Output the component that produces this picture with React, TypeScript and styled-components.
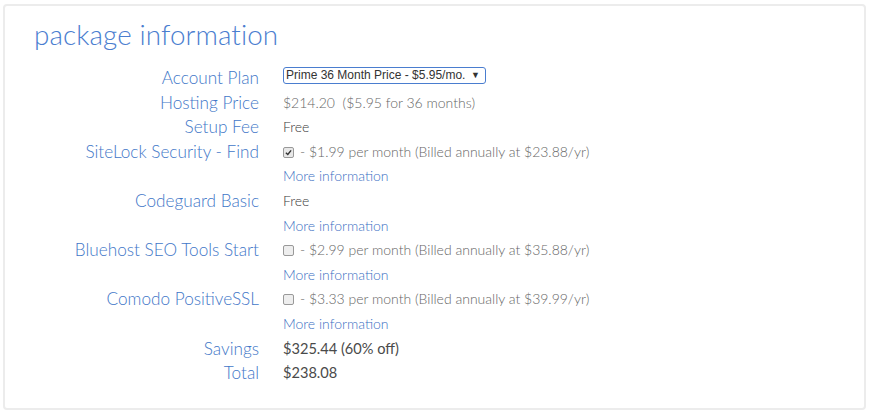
import React from 'react'
import styled, { createGlobalStyle } from 'styled-components'

const GlobalStyle = createGlobalStyle`
  html, body {
    margin: 0;
    padding: 0;
    background: #ffffff;
    font-family: Lato, "Open Sans", sans-serif;
  }
`

const Page = styled.div`
  padding: 4px 3px 4px 3px;
`

const Panel = styled.div`
  border: 2px solid #ececec;
  border-radius: 4px;
  background: #fff;
  padding: 12px 28px 26px 29px;
  height: 406px;
  box-sizing: border-box;
`

const Title = styled.h2`
  margin: 0 0 14px 0;
  font-family: Lato, sans-serif;
  font-weight: 300;
  font-size: 27.8px;
  line-height: 34px;
  color: #4a7dcf;
  letter-spacing: 0.1px;
`

const Grid = styled.div`
  display: grid;
  grid-template-columns: 225px 1fr;
  column-gap: 24px;
`

const Label = styled.div`
  text-align: right;
  font-weight: 300;
  font-size: 17.2px;
  line-height: 24.6px;
  color: #4277c8;
  white-space: nowrap;
`

const ValueCell = styled.div`
  display: flex;
  flex-direction: column;
`

const Line = styled.div<{ $tone?: 'light' | 'dark' | 'strong' }>`
  display: flex;
  align-items: center;
  gap: 4px;
  font-size: ${({ $tone }) => ($tone === 'strong' ? '14.6px' : '14px')};
  line-height: 24.6px;
  font-weight: ${({ $tone }) => ($tone === 'strong' ? 400 : 300)};
  color: ${({ $tone }) =>
    $tone === 'light' ? '#666' : $tone === 'strong' ? '#4a4a4a' : '#3a3a3a'};
  white-space: pre;
`

const MoreInfo = styled.a`
  font-size: 14px;
  line-height: 24.6px;
  font-weight: 300;
  color: #3a6fc3;
  text-decoration: none;
`

const Select = styled.div`
  display: inline-flex;
  align-items: center;
  justify-content: space-between;
  margin-top: 1px;
  width: 203px;
  height: 17px;
  box-sizing: border-box;
  border: 1px solid #4a7dcf;
  border-radius: 3px;
  padding: 0 5px 0 2px;
  font-family: "Liberation Sans", Arial, sans-serif;
  font-size: 12px;
  color: #333;
`

const Arrow = styled.span`
  font-size: 9px;
  color: #333;
`

const Box = styled.span<{ $checked?: boolean }>`
  display: inline-flex;
  align-items: center;
  justify-content: center;
  width: 9px;
  height: 9px;
  border: 1px solid #999;
  border-radius: 2px;
  background: ${({ $checked }) => ($checked ? '#e8e8e8' : '#eeeeee')};
  margin-right: 2px;
`

const Check = () => (
  <svg width="7" height="7" viewBox="0 0 8 8">
    <path d="M1 4.2 L3.2 6.3 L7 1.6" fill="none" stroke="#333" strokeWidth="1.6" />
  </svg>
)

type Row = {
  label: string
  value?: React.ReactNode
  tone?: 'light' | 'dark' | 'strong'
  more?: boolean
}

const rows: Row[] = [
  {
    label: 'Account Plan',
    value: (
      <Select>
        <span>Prime 36 Month Price - $5.95/mo.</span>
        <Arrow>▼</Arrow>
      </Select>
    )
  },
  { label: 'Hosting Price', value: '$214.20  ($5.95 for 36 months)', tone: 'light' },
  { label: 'Setup Fee', value: 'Free' },
  {
    label: 'SiteLock Security - Find',
    value: (
      <>
        <Box $checked>
          <Check />
        </Box>
        - $1.99 per month (Billed annually at $23.88/yr)
      </>
    ),
    tone: 'light',
    more: true
  },
  { label: 'Codeguard Basic', value: 'Free', more: true },
  {
    label: 'Bluehost SEO Tools Start',
    value: (
      <>
        <Box />- $2.99 per month (Billed annually at $35.88/yr)
      </>
    ),
    tone: 'light',
    more: true
  },
  {
    label: 'Comodo PositiveSSL',
    value: (
      <>
        <Box />- $3.33 per month (Billed annually at $39.99/yr)
      </>
    ),
    tone: 'light',
    more: true
  },
  { label: 'Savings', value: '$325.44 (60% off)', tone: 'strong' },
  { label: 'Total', value: '$238.08', tone: 'strong' }
]

export default function App() {
  return (
    <>
      <GlobalStyle />
      <Page>
        <Panel>
          <Title>package information</Title>
          <Grid>
            {rows.map((r) => (
              <React.Fragment key={r.label}>
                <Label>{r.label}</Label>
                <ValueCell>
                  <Line $tone={r.tone}>{r.value}</Line>
                  {r.more && <MoreInfo href="#">More information</MoreInfo>}
                </ValueCell>
              </React.Fragment>
            ))}
          </Grid>
        </Panel>
      </Page>
    </>
  )
}
